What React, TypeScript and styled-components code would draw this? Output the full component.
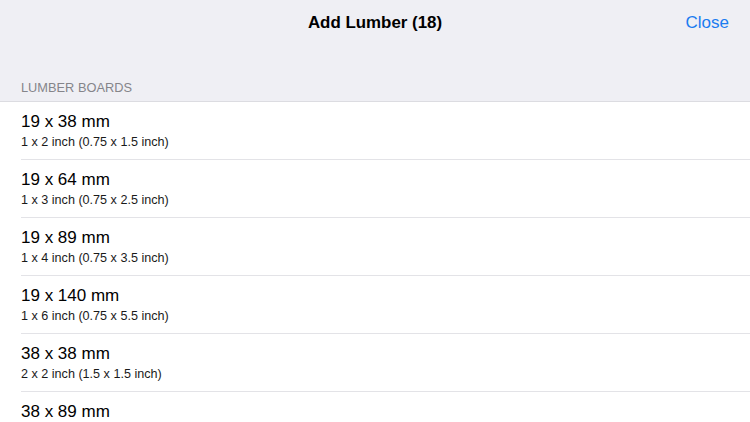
import * as React from "react";
import styled, { createGlobalStyle } from "styled-components";

const GlobalStyle = createGlobalStyle`
  html, body {
    margin: 0;
    padding: 0;
    background: #ffffff;
    font-family: "Liberation Sans", Arial, sans-serif;
    -webkit-font-smoothing: antialiased;
  }
`;

const Screen = styled.div`
  width: 750px;
  height: 422px;
  overflow: hidden;
  background: #ffffff;
`;

const Header = styled.div`
  background: #efeff4;
  border-bottom: 1px solid #dcdce1;
`;

const NavBar = styled.div`
  display: grid;
  grid-template-columns: 1fr auto 1fr;
  align-items: center;
  padding: 13px 21px 0;
  height: 20px;
`;

const Title = styled.div`
  grid-column: 2;
  font-size: 16.9px;
  line-height: 20px;
  font-weight: bold;
  color: #000000;
`;

const CloseButton = styled.button`
  grid-column: 3;
  justify-self: end;
  border: 0;
  background: none;
  padding: 0;
  font-family: inherit;
  font-size: 17px;
  line-height: 20px;
  color: #1a7cf0;
  cursor: pointer;
`;

const SectionLabel = styled.div`
  padding: 47px 21px 6px;
  font-size: 12.8px;
  line-height: 15px;
  color: #85858a;
  text-transform: uppercase;
`;

const List = styled.ul`
  list-style: none;
  margin: 0;
  padding: 0 0 0 21px;
`;

const Row = styled.li`
  padding: 10px 0 9px;
  border-bottom: 1px solid #e3e3e7;
  cursor: pointer;
`;

const RowTitle = styled.div`
  font-size: 17px;
  line-height: 20px;
  color: #000000;
`;

const RowSubtitle = styled.div`
  margin-top: 3px;
  font-size: 12.6px;
  line-height: 15px;
  color: #1a1a1a;
`;

const boards = [
  { mm: "19 x 38 mm", inch: "1 x 2 inch (0.75 x 1.5 inch)" },
  { mm: "19 x 64 mm", inch: "1 x 3 inch (0.75 x 2.5 inch)" },
  { mm: "19 x 89 mm", inch: "1 x 4 inch (0.75 x 3.5 inch)" },
  { mm: "19 x 140 mm", inch: "1 x 6 inch (0.75 x 5.5 inch)" },
  { mm: "38 x 38 mm", inch: "2 x 2 inch (1.5 x 1.5 inch)" },
  { mm: "38 x 89 mm", inch: "2 x 4 inch (1.5 x 3.5 inch)" },
];

export default function App() {
  return (
    <Screen>
      <GlobalStyle />
      <Header>
        <NavBar>
          <Title>Add Lumber (18)</Title>
          <CloseButton>Close</CloseButton>
        </NavBar>
        <SectionLabel>Lumber Boards</SectionLabel>
      </Header>
      <List>
        {boards.map((b) => (
          <Row key={b.mm}>
            <RowTitle>{b.mm}</RowTitle>
            <RowSubtitle>{b.inch}</RowSubtitle>
          </Row>
        ))}
      </List>
    </Screen>
  );
}
